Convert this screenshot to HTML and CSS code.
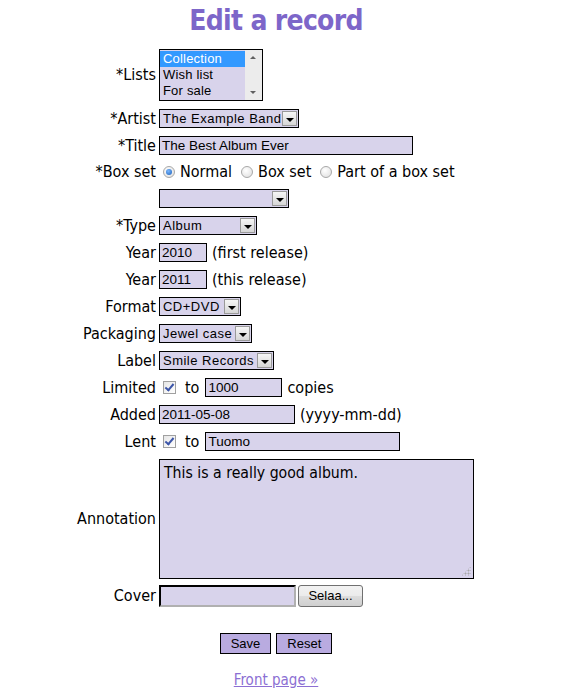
FILE: index.html
```html
<!DOCTYPE html>
<html lang="en">
<head>
<meta charset="utf-8">
<title>Edit a record</title>
<link rel="stylesheet" href="styles.css">
</head>
<body>
<h1 class="page-title">Edit a record</h1>
<form class="record-form">
  <div class="label">*Lists</div>
  <div class="field">
    <div class="listbox">
      <div class="listbox-options">
        <div class="opt selected">Collection</div>
        <div class="opt">Wish list</div>
        <div class="opt">For sale</div>
      </div>
      <div class="listbox-scroll">
        <span class="sarrow up"></span>
        <span class="sarrow down"></span>
      </div>
    </div>
  </div>

  <div class="label">*Artist</div>
  <div class="field"><span class="select w-artist"><span class="select-text">The Example Band</span><span class="select-btn"></span></span></div>

  <div class="label">*Title</div>
  <div class="field"><span class="text-input w-title">The Best Album Ever</span></div>

  <div class="label row-short">*Box set</div>
  <div class="field radios row-short">
    <span class="radio checked"></span><span class="opt-label">Normal</span>
    <span class="radio"></span><span class="opt-label">Box set</span>
    <span class="radio"></span><span class="opt-label">Part of a box set</span>
  </div>

  <div class="label"></div>
  <div class="field"><span class="select w-empty"><span class="select-text"></span><span class="select-btn"></span></span></div>

  <div class="label">*Type</div>
  <div class="field"><span class="select w-type"><span class="select-text">Album</span><span class="select-btn"></span></span></div>

  <div class="label">Year</div>
  <div class="field"><span class="text-input w-year">2010</span><span class="note">(first release)</span></div>

  <div class="label row-short">Year</div>
  <div class="field row-short"><span class="text-input w-year">2011</span><span class="note">(this release)</span></div>

  <div class="label">Format</div>
  <div class="field"><span class="select w-format"><span class="select-text">CD+DVD</span><span class="select-btn"></span></span></div>

  <div class="label">Packaging</div>
  <div class="field"><span class="select w-pack"><span class="select-text">Jewel case</span><span class="select-btn"></span></span></div>

  <div class="label">Label</div>
  <div class="field"><span class="select w-label"><span class="select-text">Smile Records</span><span class="select-btn"></span></span></div>

  <div class="label">Limited</div>
  <div class="field"><span class="checkbox"></span><span class="to">to</span><span class="text-input w-limited">1000</span><span class="note">copies</span></div>

  <div class="label">Added</div>
  <div class="field"><span class="text-input w-added">2011-05-08</span><span class="note">(yyyy-mm-dd)</span></div>

  <div class="label row-short">Lent</div>
  <div class="field row-short"><span class="checkbox"></span><span class="to">to</span><span class="text-input w-lent">Tuomo</span></div>

  <div class="label">Annotation</div>
  <div class="field"><div class="textarea">This is a really good album.<span class="grip"></span></div></div>

  <div class="label cover-row">Cover</div>
  <div class="field cover-row"><span class="file-input"></span><span class="browse-btn">Selaa...</span></div>
</form>
<div class="actions">
  <span class="btn">Save</span><span class="btn">Reset</span>
</div>
<p class="front"><a href="#" class="front-link">Front page »</a></p>
</body>
</html>
```

FILE: styles.css
```css
html, body {
  margin: 0;
  padding: 0;
  background: #ffffff;
}
body {
  width: 585px;
  font-family: "DejaVu Sans Condensed", "DejaVu Sans", sans-serif;
  font-size: 16px;
  color: #000;
}
.page-title {
  margin: 0;
  padding: 4px 33px 0 0;
  height: 45px;
  box-sizing: border-box;
  text-align: center;
  font-family: "DejaVu Sans Condensed", "DejaVu Sans", sans-serif;
  font-weight: bold;
  font-size: 28px;
  letter-spacing: -0.7px;
  line-height: 34px;
  color: #7d66c9;
}
.record-form {
  display: grid;
  grid-template-columns: auto auto;
  column-gap: 3px;
  row-gap: 8px;
  justify-content: center;
  padding-right: 34px;
  margin-top: 4px;
}
.label {
  text-align: right;
  align-self: center;
  line-height: 18px;
}
.field {
  display: flex;
  align-items: center;
  min-height: 19px;
}
.row-short {
  min-height: 18px;
}
.cover-row {
  margin-top: -2px;
}
.listbox {
  width: 104px;
  height: 52px;
  box-sizing: border-box;
  border: 1px solid #000;
  background: #d8d3eb;
  display: flex;
}
.listbox-options {
  flex: 1;
  font-family: "Liberation Sans", Arial, sans-serif;
  font-size: 13px;
  letter-spacing: 0.2px;
  line-height: 16px;
  padding-top: 1px;
}
.opt {
  padding-left: 3px;
  height: 16px;
}
.opt.selected {
  background: #3399ff;
  color: #fff;
}
.listbox-scroll {
  width: 17px;
  background: #ececec;
  position: relative;
}
.sarrow {
  position: absolute;
  left: 5px;
  width: 0;
  height: 0;
  border-left: 3px solid transparent;
  border-right: 3px solid transparent;
}
.sarrow.up { top: 6px; border-bottom: 3px solid #606060; }
.sarrow.down { bottom: 6px; border-top: 3px solid #606060; }

.select {
  display: inline-flex;
  align-items: stretch;
  height: 19px;
  box-sizing: border-box;
  border: 1px solid #000;
  background: #d8d3eb;
  font-family: "Liberation Sans", Arial, sans-serif;
  font-size: 13px;
  letter-spacing: 0.5px;
  line-height: 17px;
}
.select-text {
  flex: 1;
  padding-left: 3px;
  white-space: nowrap;
  overflow: hidden;
}
.select-btn {
  flex: none;
  width: 15px;
  margin: 1px;
  box-sizing: border-box;
  border: 1px solid #9a9a9a;
  background: linear-gradient(#f6f6f6, #d6d6d6);
  position: relative;
}
.select-btn::after {
  content: "";
  position: absolute;
  left: 3px;
  top: 6px;
  border-left: 4px solid transparent;
  border-right: 4px solid transparent;
  border-top: 4px solid #000;
}
.w-artist { width: 140px; }
.w-empty { width: 130px; }
.w-type { width: 98px; }
.w-format { width: 82px; }
.w-pack { width: 93px; }
.w-label { width: 115px; }

.text-input {
  display: inline-block;
  flex: none;
  height: 19px;
  box-sizing: border-box;
  border: 1px solid #000;
  background: #d8d3eb;
  font-family: "Liberation Sans", Arial, sans-serif;
  font-size: 13.5px;
  line-height: 17px;
  padding-left: 2px;
  white-space: nowrap;
  overflow: hidden;
}
.w-title { width: 254px; }
.w-year { width: 48px; }
.w-limited { width: 77px; }
.w-added { width: 136px; }
.w-lent { width: 195px; }

.note {
  margin-left: 5px;
  line-height: 18px;
}
.radios {
  line-height: 18px;
}
.radio {
  flex: none;
  width: 12px;
  height: 12px;
  box-sizing: border-box;
  border-radius: 50%;
  border: 1px solid #a8a8a8;
  background: radial-gradient(circle at 40% 35%, #ffffff, #dcdcdc);
  margin: 0 5px 0 4px;
  position: relative;
}
.radio.checked::after {
  content: "";
  position: absolute;
  left: 2px;
  top: 2px;
  width: 6px;
  height: 6px;
  border-radius: 50%;
  background: radial-gradient(circle at 40% 35%, #7ab8ff, #1b5fb8);
}
.opt-label {
  margin-right: 5px;
}
.checkbox {
  flex: none;
  width: 13px;
  height: 13px;
  box-sizing: border-box;
  border: 1px solid #a0a0a0;
  background: linear-gradient(135deg, #e6e6e6, #ffffff);
  margin: 0 0 0 4px;
  position: relative;
}
.checkbox::after {
  content: "";
  position: absolute;
  left: 3px;
  top: 0px;
  width: 3px;
  height: 7px;
  border-right: 2px solid #3c55a8;
  border-bottom: 2px solid #3c55a8;
  transform: rotate(40deg);
}
.to {
  margin: 0 6px 0 9px;
  line-height: 18px;
}
.textarea {
  width: 315px;
  height: 120px;
  box-sizing: border-box;
  border: 1px solid #000;
  background: #d8d3eb;
  font-size: 15.7px;
  line-height: 20px;
  padding: 3px 4px;
  position: relative;
}
.grip {
  position: absolute;
  right: 2px;
  bottom: 2px;
  width: 10px;
  height: 10px;
  background:
    radial-gradient(circle, #a8a8a8 0.9px, transparent 1.1px) 0 0 / 3px 3px;
  clip-path: polygon(100% 0, 100% 100%, 0 100%);
}
.file-input {
  display: inline-block;
  flex: none;
  width: 137px;
  height: 22px;
  box-sizing: border-box;
  border-top: 2px solid #000;
  border-left: 2px solid #000;
  border-right: 2px solid #b0b0b0;
  border-bottom: 2px solid #b0b0b0;
  background: #d8d3eb;
}
.browse-btn {
  display: inline-block;
  flex: none;
  width: 65px;
  height: 22px;
  box-sizing: border-box;
  margin-left: 2px;
  border: 1px solid #707070;
  border-radius: 3px;
  background: linear-gradient(#f2f2f2 0%, #ebebeb 50%, #dddddd 51%, #cfcfcf 100%);
  font-family: "Liberation Sans", Arial, sans-serif;
  font-size: 13px;
  line-height: 20px;
  text-align: center;
}
.actions {
  display: flex;
  justify-content: center;
  gap: 5px;
  margin-top: 26px;
  padding-right: 33px;
}
.btn {
  display: inline-block;
  height: 21px;
  box-sizing: border-box;
  border: 1px solid #000;
  background: #b9abe0;
  font-family: "Liberation Sans", Arial, sans-serif;
  font-size: 13px;
  line-height: 19px;
  padding: 0 10px;
}
.front {
  margin: 17px 0 0;
  text-align: center;
  padding-right: 33px;
  font-size: 15px;
}
.front-link {
  color: #8c6fd3;
  text-decoration: underline;
}
```
